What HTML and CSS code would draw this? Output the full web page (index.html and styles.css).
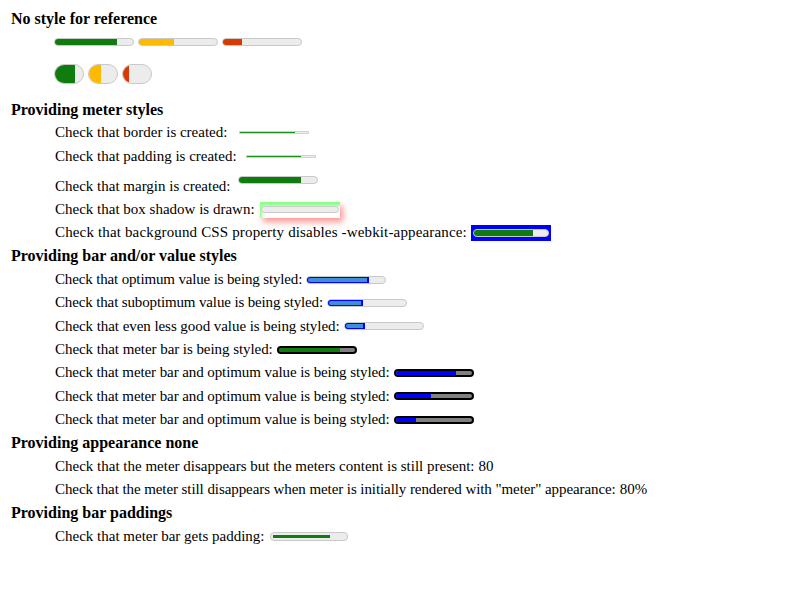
FILE: index.html
```html
<!DOCTYPE html>
<html>
<head>
<meta charset="utf-8">
<link rel="stylesheet" href="styles.css">
</head>
<body>
<div class="page">
  <div class="h h-first">No style for reference</div>
  <div class="bars">
    <div class="m"><div class="f green" style="width:81%"></div></div>
    <div class="m"><div class="f yellow" style="width:46%"></div></div>
    <div class="m"><div class="f red" style="width:26%"></div></div>
  </div>
  <div class="pills">
    <div class="pill"><div class="f green" style="width:75%"></div></div>
    <div class="pill"><div class="f yellow" style="width:46%"></div></div>
    <div class="pill"><div class="f red" style="width:26%"></div></div>
  </div>

  <div class="h">Providing meter styles</div>
  <div class="row"><span>Check that border is created:</span><div class="thin gap-border"><div class="f green" style="width:80%"></div></div></div>
  <div class="row"><span>Check that padding is created:</span><div class="thin gap-padding"><div class="f green" style="width:80%"></div></div></div>
  <div class="row row-margin"><span>Check that margin is created:</span><div class="m m-margin"><div class="f green" style="width:81%"></div></div></div>
  <div class="row"><span>Check that box shadow is drawn:</span><div class="shadowbox"><div class="m m-inner"></div></div></div>
  <div class="row"><span class="ls-wide">Check that background CSS property disables -webkit-appearance:</span><div class="bluebox"><div class="m m-inner2"><div class="f green" style="width:81%"></div></div></div></div>

  <div class="h">Providing bar and/or value styles</div>
  <div class="row"><span class="ls-15">Check that optimum value is being styled:</span><div class="m"><div class="f bluefill" style="width:80%"></div></div></div>
  <div class="row"><span class="ls-14">Check that suboptimum value is being styled:</span><div class="m"><div class="f bluefill" style="width:46%"></div></div></div>
  <div class="row"><span class="ls-6">Check that even less good value is being styled:</span><div class="m"><div class="f bluefill" style="width:27%"></div></div></div>
  <div class="row"><span class="ls-6">Check that meter bar is being styled:</span><div class="dark"><div class="f green" style="width:80%"></div></div></div>
  <div class="row"><span class="ls-9">Check that meter bar and optimum value is being styled:</span><div class="dark"><div class="f blue" style="width:80%"></div></div></div>
  <div class="row"><span class="ls-9">Check that meter bar and optimum value is being styled:</span><div class="dark"><div class="f blue" style="width:47%"></div></div></div>
  <div class="row"><span class="ls-9">Check that meter bar and optimum value is being styled:</span><div class="dark"><div class="f blue" style="width:27%"></div></div></div>

  <div class="h">Providing appearance none</div>
  <div class="row"><span>Check that the meter disappears but the meters content is still present:</span><span class="val">80</span></div>
  <div class="row"><span class="ls-8">Check that the meter still disappears when meter is initially rendered with "meter" appearance:</span><span class="val">80%</span></div>

  <div class="h">Providing bar paddings</div>
  <div class="row"><span>Check that meter bar gets padding:</span><div class="padded"><div class="f green padded-fill" style="width:80%"></div></div></div>
</div>
</body>
</html>
```

FILE: styles.css
```css
html, body {
  margin: 0;
  padding: 0;
  background: #ffffff;
}

body {
  font-family: "Liberation Serif", "Times New Roman", serif;
  font-size: 15px;
  color: #000000;
}

.page {
  display: flex;
  flex-direction: column;
}

.h {
  display: flex;
  align-items: center;
  height: 23.33px;
  padding-left: 11px;
  font-weight: bold;
  font-size: 16px;
}

.h-first {
  margin-top: 7px;
  height: 24px;
}

.bars {
  display: flex;
  gap: 4px;
  height: 22px;
  align-items: center;
  padding-left: 54px;
}

.pills {
  display: flex;
  gap: 4px;
  height: 45px;
  align-items: flex-start;
  padding-top: 11px;
  box-sizing: border-box;
  padding-left: 54px;
}

.row {
  display: flex;
  align-items: center;
  height: 23.33px;
  padding-left: 55px;
  gap: 4px;
  white-space: nowrap;
}

.row-margin {
  height: 30px;
  align-items: flex-end;
}

.row-margin span {
  height: 23.33px;
  display: flex;
  align-items: center;
}

/* letter-spacing tweaks to follow the reference's line lengths */
.ls-wide { letter-spacing: 0.15px; }
.ls-15 { letter-spacing: -0.15px; }
.ls-14 { letter-spacing: -0.14px; }
.ls-9 { letter-spacing: -0.09px; }
.ls-8 { letter-spacing: -0.08px; }
.ls-6 { letter-spacing: -0.06px; }

.m {
  width: 80px;
  height: 8px;
  box-sizing: border-box;
  border: 1px solid #c9c9c9;
  border-radius: 4px;
  background: #ececec;
  overflow: hidden;
  display: flex;
  flex-shrink: 0;
}

.f {
  height: 100%;
}

.green { background: #107c10; }
.yellow { background: #ffb900; }
.red { background: #d83b01; }
.blue { background: #0000ff; }

.bars .f, .pills .f, .m .f {
  margin: -1px 0 -1px -1px;
  height: calc(100% + 2px);
}

.pill {
  width: 30px;
  height: 20px;
  box-sizing: border-box;
  border: 1px solid #c9c9c9;
  border-radius: 10px;
  background: #ececec;
  overflow: hidden;
  display: flex;
}

.thin {
  width: 70px;
  height: 3px;
  box-sizing: border-box;
  border: 1px solid #d2d2d2;
  background: #ececec;
  display: flex;
  flex-shrink: 0;
}

.thin .f {
  height: 1px;
  background: #189018;
}

.gap-border { margin-left: 8px; }
.gap-padding { margin-left: 5px; }

.m-margin {
  margin-left: 3px;
  margin-bottom: 14px;
}

.shadowbox {
  width: 80px;
  height: 16px;
  box-sizing: border-box;
  padding: 4px 1px 0 1px;
  background: #ffffff;
  box-shadow: inset 2px 4px 3px #8aff8a, 3px 4px 6px rgba(255, 60, 60, 0.55);
  margin-left: 1px;
  flex-shrink: 0;
}

.m-inner {
  width: 78px;
  height: 7px;
}

.bluebox {
  width: 80px;
  height: 16px;
  box-sizing: border-box;
  background: #0000ff;
  padding: 4px 2px;
  flex-shrink: 0;
}

.m-inner2 {
  width: 76px;
}

.bluefill {
  box-sizing: border-box;
  border: 2px solid #0000ff;
  border-radius: 4px 0 0 4px;
  background: #3f8fd8;
}

.dark {
  width: 80px;
  height: 8px;
  box-sizing: border-box;
  border: 2px solid #000000;
  border-radius: 4px;
  background: #808080;
  overflow: hidden;
  display: flex;
  flex-shrink: 0;
}

.val {
  font-size: 15px;
}

.padded {
  width: 78px;
  height: 9px;
  box-sizing: border-box;
  border: 1px solid #c9c9c9;
  border-radius: 4px;
  background: #ececec;
  padding: 2px 2px;
  display: flex;
  margin-left: 1px;
  flex-shrink: 0;
}

.padded-fill {
  height: 3px;
}
```
